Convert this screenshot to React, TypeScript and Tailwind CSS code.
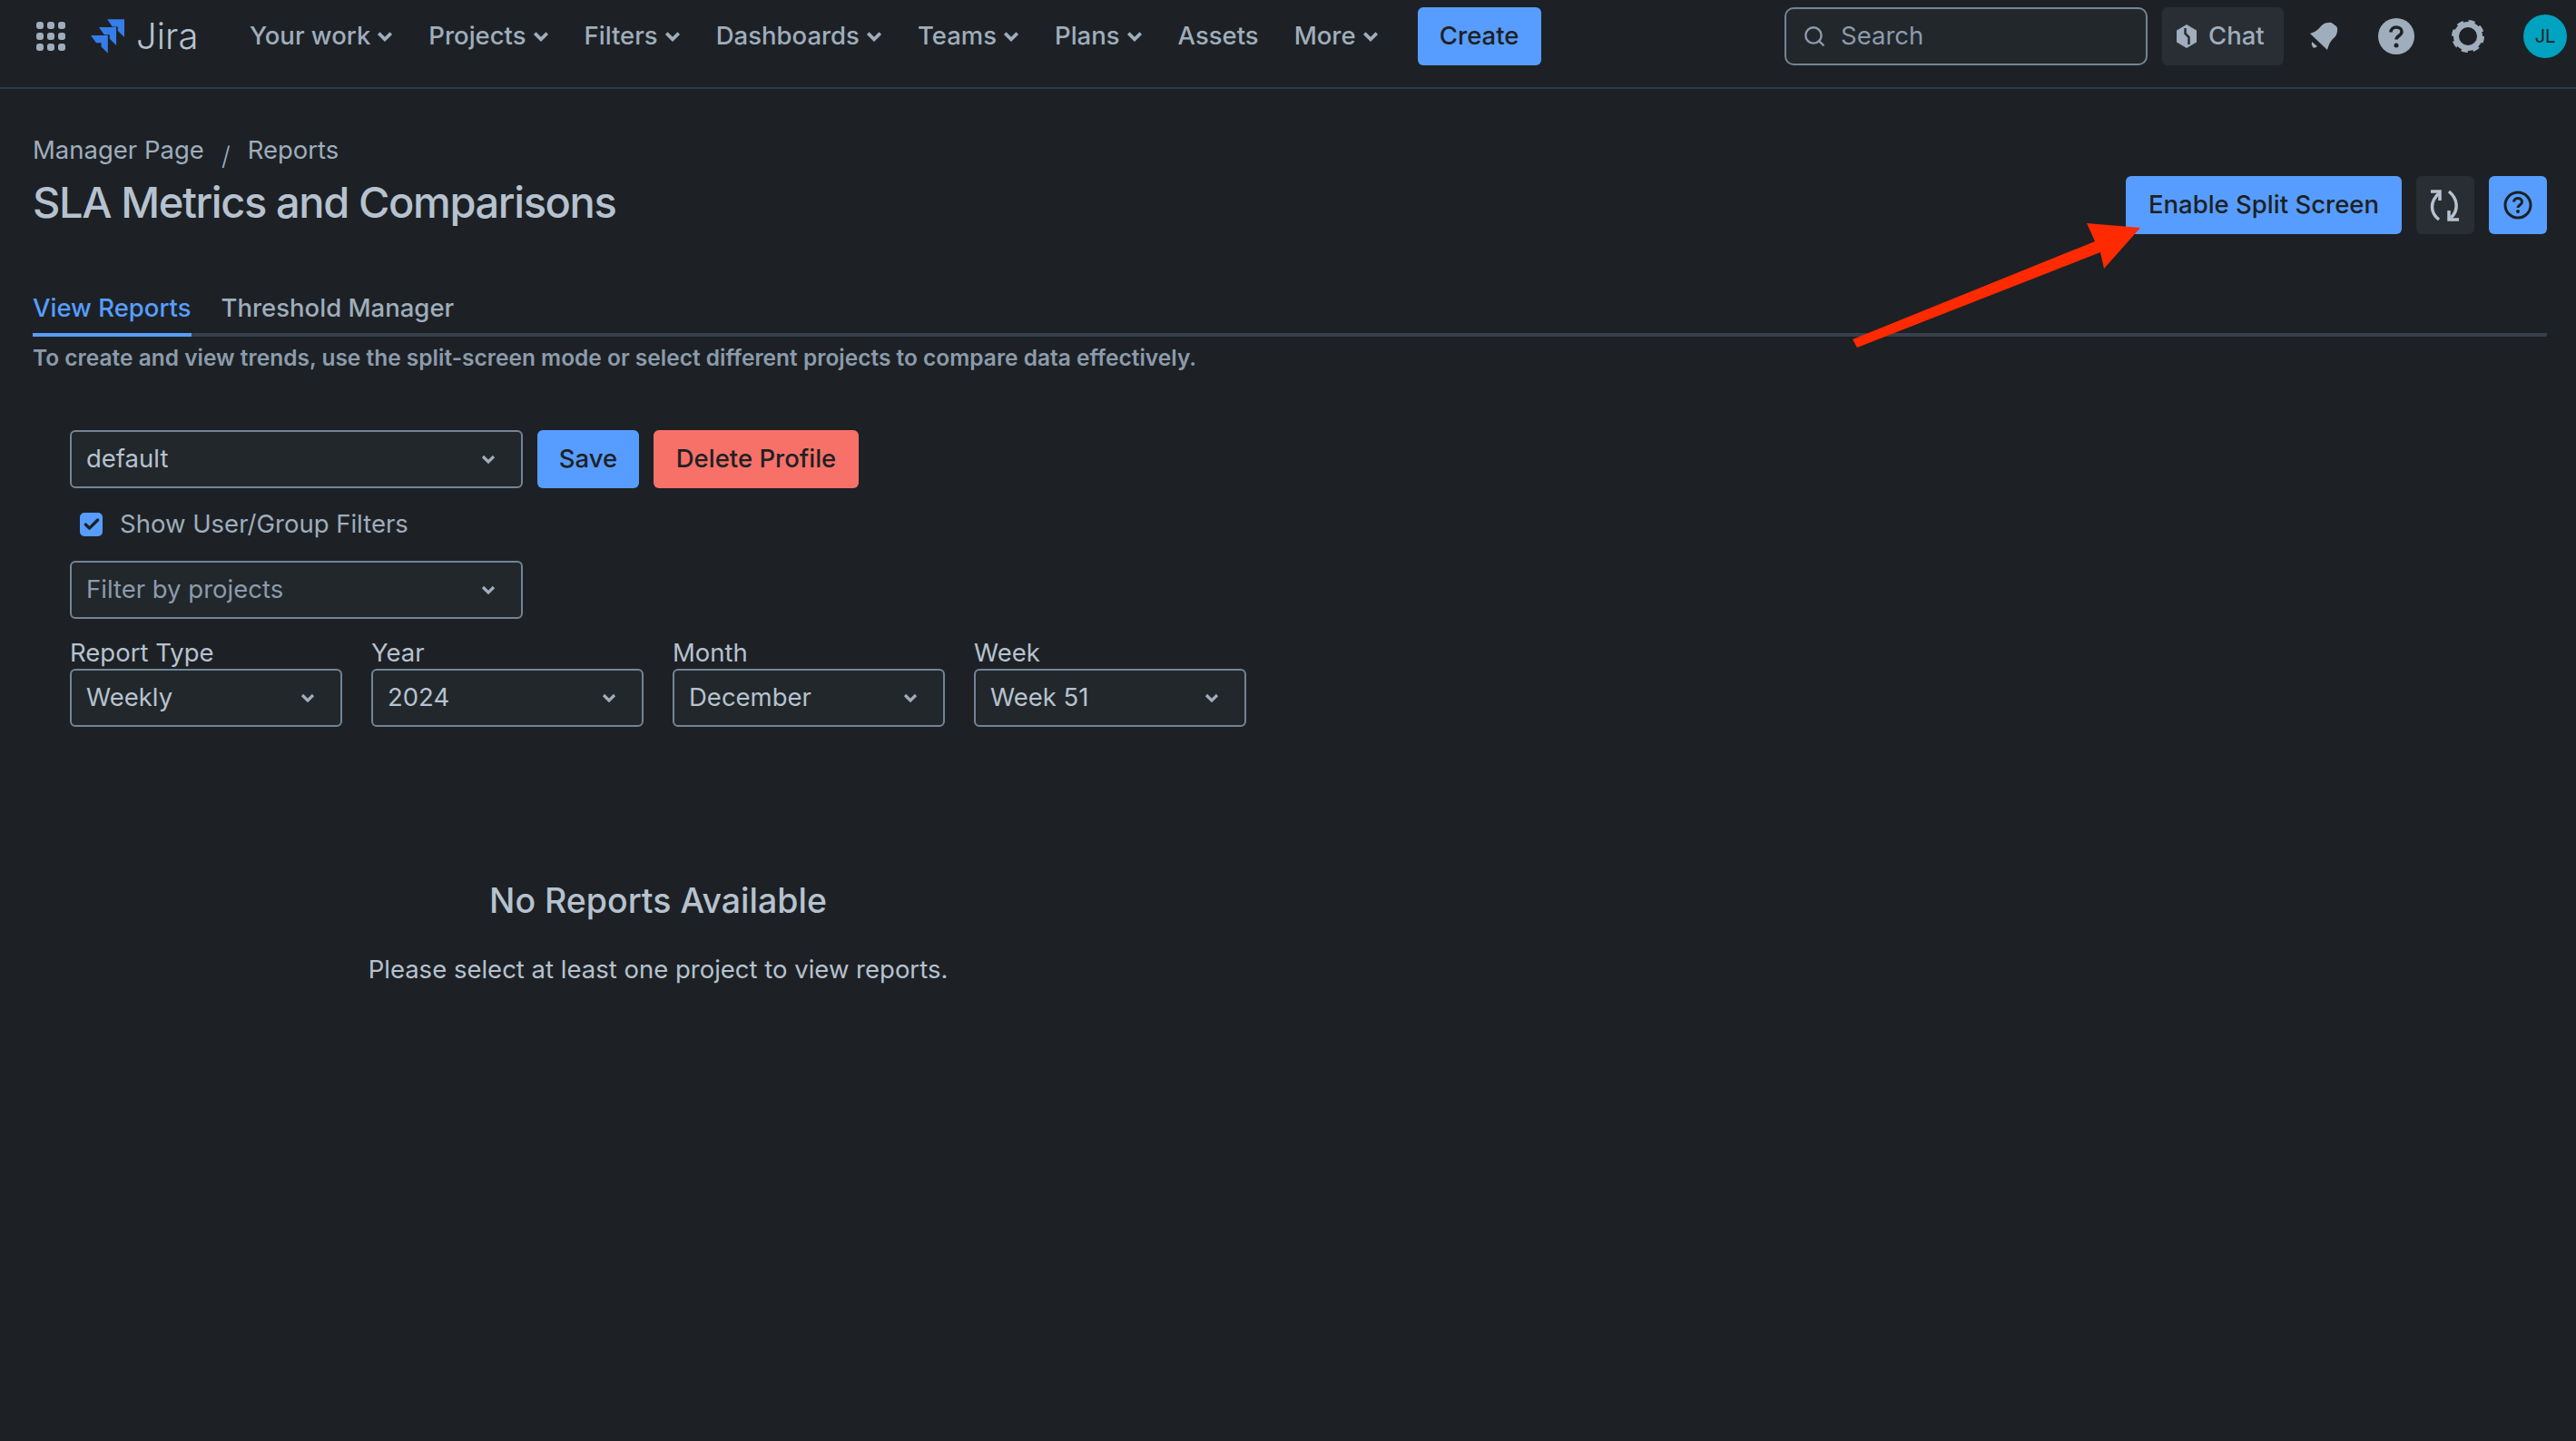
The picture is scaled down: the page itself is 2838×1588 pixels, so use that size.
import { Check, Search } from "lucide-react";

const navItems = [
  { label: "Your work", menu: true },
  { label: "Projects", menu: true },
  { label: "Filters", menu: true },
  { label: "Dashboards", menu: true },
  { label: "Teams", menu: true },
  { label: "Plans", menu: true },
  { label: "Assets", menu: false },
  { label: "More", menu: true },
];

function Caret({ className }: { className?: string }) {
  return (
    <svg viewBox="0 0 16 16" className={className} fill="none">
      <path d="M2 5l6 6 6-6" stroke="currentColor" strokeWidth="3.2" />
    </svg>
  );
}

function JiraLogo() {
  return (
    <svg viewBox="240 70 112 114" className="w-[37px] h-[38px]" fill="#357de8">
      <path d="M295 70H352V130L330 108V95H312Z" />
      <path d="M267 97H325V157L303 135V122H285Z" />
      <path d="M240 124H297V184L275 162V149H258Z" />
    </svg>
  );
}

function Select({ value, placeholder, width }: { value: string; placeholder?: boolean; width: string }) {
  return (
    <div
      className={`${width} h-[64px] flex items-center justify-between pl-[16px] pr-[28px] bg-[#22272b] border-2 border-[#738496] rounded-[6px] text-[27.5px] ${
        placeholder ? "text-[#8c9bab]" : "text-[#b6c2cf]"
      }`}
    >
      <span>{value}</span>
      <Caret className="w-[16px] h-[16px] text-[#9fadbc]" />
    </div>
  );
}

function Field({ label, value }: { label: string; value: string }) {
  return (
    <div className="flex flex-col">
      <label className="text-[27.5px] leading-[32px] text-[#b6c2cf] mb-[2px]">{label}</label>
      <Select value={value} width="w-[300px]" />
    </div>
  );
}

export default function App() {
  return (
    <div className="relative min-h-screen bg-[#1d2125] font-['Inter',sans-serif]">
      <header className="h-[98px] flex items-center border-b-2 border-[#2f3740] pb-[16px] pl-[40px] pr-[10px]">
        <div className="grid grid-cols-3 gap-[4px] w-[32px]">
          {Array.from({ length: 9 }).map((_, i) => (
            <span key={i} className="w-[8px] h-[8px] rounded-[3px] bg-[#9fadbc]" />
          ))}
        </div>
        <div className="flex items-center ml-[28px] gap-[13px] w-[175px]">
          <JiraLogo />
          <span className="text-[40px] font-light text-[#b6c2cf] leading-none">Jira</span>
        </div>
        <nav className="flex items-center gap-[39px]">
          {navItems.map((item) => (
            <a key={item.label} className="flex items-center gap-[7px] text-[27.5px] font-medium text-[#9fadbc]">
              {item.label}
              {item.menu && <Caret className="w-[18px] h-[18px]" />}
            </a>
          ))}
        </nav>
        <button className="ml-[43px] w-[136px] h-[64px] rounded-[6px] bg-[#579dff] text-[27.5px] font-medium text-[#1d2125]">
          Create
        </button>
        <div className="ml-auto flex items-center">
          <div className="w-[400px] h-[64px] flex items-center gap-[16px] pl-[18px] bg-[#22272b] border-2 border-[#738496] rounded-[10px] text-[27.5px] text-[#8c9bab]">
            <Search className="w-[26px] h-[26px]" strokeWidth={2.2} />
            Search
          </div>
          <div className="ml-[16px] w-[134px] h-[64px] flex items-center gap-[13px] pl-[16px] rounded-[6px] bg-[#282e33] text-[27.5px] font-medium text-[#9fadbc]">
            <svg viewBox="0 0 22 26" className="w-[22px] h-[26px]">
              <path d="M11 0L22 6.500V19.500L11 26L0 19.500V6.500Z" fill="#9fadbc" />
              <path d="M9.500 4V10L13.500 14V22" fill="none" stroke="#282e33" strokeWidth="2.500" />
            </svg>
            Chat
          </div>
          <svg viewBox="0 0 32 32" className="ml-[28px] w-[32px] h-[32px]" fill="#9fadbc">
            <path d="M1 13Q8 11 12 6Q16 1 21 1Q24 0 26 2L30 5Q32 7 31 10Q31 15 26 19Q22 23 20 31Z" />
            <path d="M3 22L9 27Q6 30 4 28Q2 25 3 22Z" />
          </svg>
          <svg viewBox="0 0 40 40" className="ml-[44px] w-[40px] h-[40px]">
            <circle cx="20" cy="20" r="20" fill="#9fadbc" />
            <path d="M14 15.500c0-3.500 2.500-5.500 6-5.500s6 2 6 5c0 4.500-6 4.500-6 8.500" fill="none" stroke="#1d2125" strokeWidth="3.500" />
            <circle cx="20" cy="30" r="2.500" fill="#1d2125" />
          </svg>
          <svg viewBox="0 0 36 36" className="ml-[41px] w-[36px] h-[36px]" fill="none" stroke="#9fadbc">
            <circle cx="18" cy="18" r="13" strokeWidth="6" />
            <circle cx="18" cy="18" r="16" strokeWidth="4" strokeDasharray="7 5.570" />
          </svg>
          <div className="ml-[43px] w-[48px] h-[48px] rounded-full bg-[#00a3bf] flex items-center justify-center text-[20px] text-[#1d2125]">
            JL
          </div>
        </div>
      </header>

      <main className="pr-[32px] pl-[36px]">
        <div className="flex items-start justify-between pt-[52px]">
          <div>
            <div className="flex items-center h-[32px] text-[27.5px] text-[#9fadbc]">
              <span>Manager Page</span>
              <span className="mx-[19px] text-[28px] font-light translate-y-[6px]">/</span>
              <span>Reports</span>
            </div>
            <h1 className="mt-[13px] text-[47px] leading-[56px] font-medium tracking-[-1.4px] text-[#b6c2cf]">SLA Metrics and Comparisons</h1>
          </div>
          <div className="flex items-center gap-[16px] mt-[44px]">
            <button className="w-[304px] h-[64px] rounded-[6px] bg-[#579dff] text-[27.5px] font-medium text-[#1d2125]">
              Enable Split Screen
            </button>
            <button className="w-[64px] h-[64px] rounded-[6px] bg-[#282e33] flex items-center justify-center">
              <svg viewBox="0 0 64 64" className="w-[64px] h-[64px]" fill="none" stroke="#b6c2cf" strokeWidth="3.500">
                <path d="M25 48C15 40 15 28 25 19" />
                <path d="M16 17H26V27" />
                <path d="M36 17C46 25 47 38 38 46" />
                <path d="M36 38V48H47" />
              </svg>
            </button>
            <button className="w-[64px] h-[64px] rounded-[6px] bg-[#579dff] flex items-center justify-center">
              <svg viewBox="0 0 32 32" className="w-[32px] h-[32px]" fill="none" stroke="#1d2125" strokeWidth="3">
                <circle cx="16" cy="16" r="14" />
                <path d="M11.500 12.500c0-2.500 2-4 4.500-4s4.500 1.500 4.500 4c0 3.500-4.500 3.500-4.500 6.500" />
                <circle cx="16" cy="23" r="1" strokeWidth="2" />
              </svg>
            </button>
          </div>
        </div>

        <div className="mt-[63px] flex gap-[33px] border-b-4 border-[#38414a] rounded-[2px]">
          <a className="-mb-[4px] pb-[10px] border-b-4 border-[#579dff] text-[27.5px] leading-[36px] font-medium text-[#579dff]">View Reports</a>
          <a className="pb-[10px] text-[27.5px] leading-[36px] font-medium text-[#9fadbc]">Threshold Manager</a>
        </div>
        <p className="mt-[8px] text-[24.5px] leading-[30px] font-semibold text-[#8c9bab]">
          To create and view trends, use the split-screen mode or select different projects to compare data effectively.
        </p>

        <div className="ml-[41px] mt-[65px] w-[1296px]">
          <div className="flex gap-[16px]">
            <Select value="default" width="w-[499px]" />
            <button className="w-[112px] h-[64px] rounded-[6px] bg-[#579dff] text-[27.5px] font-medium text-[#1d2125]">Save</button>
            <button className="w-[226px] h-[64px] rounded-[6px] bg-[#f87168] text-[27.5px] font-medium text-[#1d2125]">Delete Profile</button>
          </div>
          <label className="ml-[11px] mt-[27px] flex items-center gap-[19px] h-[26px] text-[27.5px] text-[#9fadbc]">
            <span className="w-[25px] h-[26px] rounded-[5px] bg-[#579dff] flex items-center justify-center">
              <Check className="w-[20px] h-[20px] text-[#1d2125]" strokeWidth={4} />
            </span>
            Show User/Group Filters
          </label>
          <div className="mt-[27px]">
            <Select value="Filter by projects" placeholder width="w-[499px]" />
          </div>
          <div className="mt-[21px] flex gap-[32px]">
            <Field label="Report Type" value="Weekly" />
            <Field label="Year" value="2024" />
            <Field label="Month" value="December" />
            <Field label="Week" value="Week 51" />
          </div>
          <div className="mt-[168px] flex flex-col items-center">
            <h2 className="text-[37.5px] leading-[48px] font-medium text-[#b6c2cf]">No Reports Available</h2>
            <p className="mt-[33px] text-[27.5px] leading-[36px] text-[#b6c2cf]">Please select at least one project to view reports.</p>
          </div>
        </div>
      </main>

      {/* annotation arrow over the page */}
      <svg className="absolute left-0 top-0 w-[2838px] h-[1588px] pointer-events-none" viewBox="0 0 2838 1588" fill="#ff2a00">
        <path d="M2041 374L2308 266L2299 246L2358 251L2318 296L2314 278L2046 383Z" />
      </svg>
    </div>
  );
}
